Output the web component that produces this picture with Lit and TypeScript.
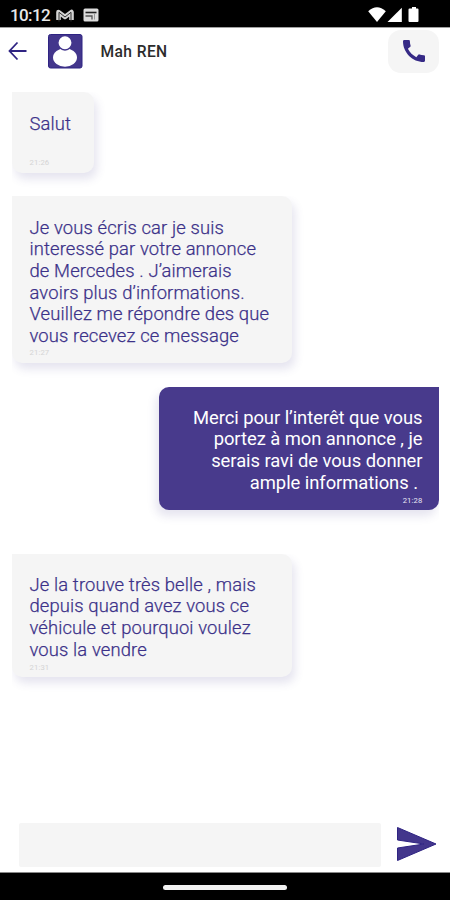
import { LitElement, html, css, svg } from "lit";
import { customElement } from "lit/decorators.js";

interface Message {
  lines: string[];
  time: string;
  kind: string;
}

const messages: Message[] = [
  { lines: ["Salut"], time: "21:26", kind: "in short" },
  {
    lines: [
      "Je vous écris car je suis",
      "interessé par votre annonce",
      "de Mercedes . J’aimerais",
      "avoirs plus d’informations.",
      "Veuillez me répondre des que",
      "vous recevez ce message",
    ],
    time: "21:27",
    kind: "in long",
  },
  {
    lines: [
      "Merci pour l’interêt que vous",
      "portez à mon annonce , je",
      "serais ravi de vous donner",
      "ample informations .\u00a0",
    ],
    time: "21:28",
    kind: "out",
  },
  {
    lines: [
      "Je la trouve très belle , mais",
      "depuis quand avez vous ce",
      "véhicule et pourquoi voulez",
      "vous la vendre",
    ],
    time: "21:31",
    kind: "in last",
  },
];

const mailIcon = svg`
  <path d="M2.500 12V4L9 8.800 15.500 4v8" fill="none" stroke="#d4d4d4" stroke-width="4.600" stroke-linejoin="round"/>
  <path d="M3 13.500V4.300L9 9l6-4.700v9.200" fill="none" stroke="#333" stroke-width="1" stroke-linejoin="round"/>`;

@customElement("app-root")
export class AppRoot extends LitElement {
  static styles = css`
    :host {
      display: flex;
      flex-direction: column;
      width: 450px;
      height: 900px;
      background: #fff;
      font-family: Roboto, sans-serif;
      overflow: hidden;
    }
    svg { display: block; flex: none; }
    .status {
      box-sizing: border-box;
      height: 28px;
      flex: none;
      background: #000;
      border-bottom: 1px solid #a0a0a0;
      display: flex;
      align-items: center;
      padding: 3px 30px 0 10px;
      color: #e8e8e8;
    }
    .clock { width: 46px; font-size: 17px; font-weight: 500; line-height: 20px; letter-spacing: -0.6px; white-space: nowrap; }
    .cal { margin-left: 8px; }
    .system { margin-left: auto; margin-top: -2px; }
    .bar {
      height: 45px;
      flex: none;
      display: flex;
      align-items: center;
      padding: 0 11px 0 8px;
      color: #2c2c2c;
    }
    .avatar { margin-left: 20.5px; margin-top: 1px; }
    .name { margin-left: 18px; margin-top: 2px; font-size: 15.6px; font-weight: 500; letter-spacing: 0.4px; }
    .call {
      margin-left: auto;
      margin-top: 2px;
      width: 51px;
      height: 43px;
      border-radius: 13px;
      background: #f5f5f5;
      display: flex;
      align-items: center;
      justify-content: center;
    }
    .call svg { margin-top: -2px; }
    .list {
      flex: 1;
      display: flex;
      flex-direction: column;
      align-items: flex-start;
      padding: 19px 11px 0 12px;
    }
    .bubble {
      box-sizing: border-box;
      font-size: 18.4px;
      line-height: 21.7px;
      padding: 20.5px 17.5px 0;
      border-radius: 0 10px 10px 10px;
      white-space: nowrap;
    }
    .in {
      background: #f5f5f5;
      color: #3c3289;
      font-weight: 300;
      letter-spacing: 0.13px;
      box-shadow: 3px 6px 10px rgba(72, 61, 139, 0.14);
      clip-path: inset(0 -20px -30px 0);
    }
    .in .text { -webkit-text-stroke: 0.25px #3c3289; }
    .short { width: 82px; height: 81px; }
    .long { width: 280px; height: 167px; margin-top: 23px; padding-top: 20.5px; }
    .last { width: 280px; height: 123px; margin-top: 44px; padding-top: 19.5px; }
    .out {
      align-self: flex-end;
      width: 280px;
      height: 123px;
      margin-top: 24px;
      padding-top: 19.5px;
      padding-right: 16.5px;
      background: #483a8c;
      color: #fff;
      text-align: right;
      letter-spacing: -0.05px;
      border-radius: 10px 0 10px 10px;
      box-shadow: -3px 6px 10px rgba(72, 61, 139, 0.14);
      clip-path: inset(0 0 -30px -20px);
    }
    .line { display: block; }
    .time { font-size: 7.7px; line-height: 9px; margin-top: 2.5px; color: #d4d4d4; font-weight: 400; }
    .short .time { margin-top: 24px; }
    .long .time { margin-top: 1px; }
    .out .time { color: #e8e8f4; letter-spacing: 0.14px; margin-top: 3px; }
    .compose {
      height: 58px;
      flex: none;
      display: flex;
      align-items: center;
      padding: 4px 13px 0 19px;
      box-sizing: border-box;
    }
    .field { width: 362px; height: 44px; background: #f5f5f5; border-radius: 2px; }
    .send { margin-left: auto; margin-top: -2px; }
    .nav {
      box-sizing: border-box;
      height: 28px;
      flex: none;
      background: #000;
      border-top: 1px solid #888;
      display: flex;
      align-items: center;
      justify-content: center;
    }
    .pill { width: 124px; height: 5px; margin-top: 1px; border-radius: 3px; background: #f2f2f2; }
  `;

  render() {
    return html`
      <div class="status">
        <span class="clock">10:12</span>
        <svg width="19" height="15" viewBox="0 0 19 15">${mailIcon}</svg>
        <svg class="cal" width="16" height="14" viewBox="0 0 16 14">
          <rect x=".5" y=".5" width="15" height="13" rx="1.5" fill="#dcdcdc" />
          <path d="M2.500 4.500h11" stroke="#222" stroke-width="1.600" />
          <path d="M2.500 8H9v3.500" fill="none" stroke="#555" stroke-width="1.300" />
          <path d="M11.500 5.500v6" stroke="#999" stroke-width="1" />
        </svg>
        <svg class="system" width="52" height="17" viewBox="0 0 52 17" fill="#fff">
          <path d="M.2 5.200Q9-2.500 17.800 5.200L9 16z" />
          <path d="M33.800 1.800V16H19.500z" />
          <path d="M41.500 2.500H44V1h4v1.500h1.500a1 1 0 0 1 1 1V15a1 1 0 0 1-1 1h-8a1 1 0 0 1-1-1V3.500a1 1 0 0 1 1-1z" />
        </svg>
      </div>
      <div class="bar">
        <svg width="19" height="20" viewBox="0 0 19 20" fill="none" stroke="#2f2483" stroke-width="1.800">
          <path d="M18.500 10H2M9.500 1.500L1.500 10l8 8.500" />
        </svg>
        <svg class="avatar" width="35" height="35" viewBox="0 0 35 35">
          <rect x=".5" y=".5" width="33.500" height="33.500" rx="2" fill="#43368c" stroke="#2f2483" />
          <ellipse cx="17" cy="23.500" rx="12" ry="9.200" fill="#fff" />
          <circle cx="17" cy="8.700" r="7.200" fill="#fff" stroke="#43368c" stroke-width="1.500" />
        </svg>
        <span class="name">Mah REN</span>
        <div class="call">
          <svg width="22" height="22" viewBox="3 3 18 18" fill="#362a86">
            <path d="M20.010 15.380c-1.230 0-2.420-.2-3.530-.56a.977.977 0 0 0-1.010.24l-1.570 1.970c-2.830-1.350-5.480-3.900-6.890-6.830l1.950-1.660c.27-.28.35-.67.240-1.020-.37-1.110-.56-2.300-.56-3.530 0-.54-.45-.99-.99-.99H4.190C3.650 3 3 3.240 3 3.990 3 13.280 10.730 21 20.010 21c.71 0 .99-.63.99-1.180v-3.450c0-.54-.45-.99-.99-.99z" />
          </svg>
        </div>
      </div>
      <div class="list">
        ${messages.map(
          (m) => html`<div class="bubble ${m.kind}">
            <div class="text">${m.lines.map((l) => html`<span class="line">${l}</span>`)}</div>
            <div class="time">${m.time}</div>
          </div>`
        )}
      </div>
      <div class="compose">
        <div class="field"></div>
        <svg class="send" width="40" height="34" viewBox="0 0 40 34">
          <path d="M.5.500L39 17 .5 33.500V21L27 17 .5 13z" fill="#43368c" stroke="#2f2483" />
        </svg>
      </div>
      <div class="nav"><div class="pill"></div></div>
    `;
  }
}
